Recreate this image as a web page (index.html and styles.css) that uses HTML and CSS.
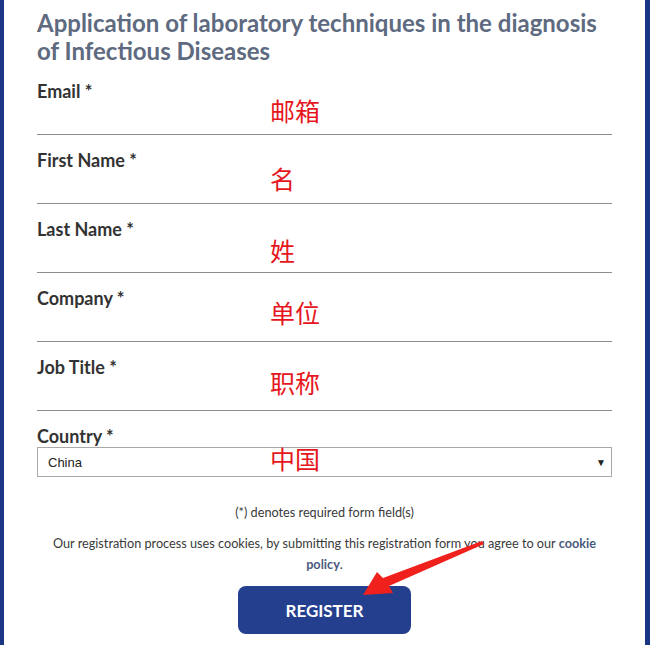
FILE: index.html
```html
<!DOCTYPE html>
<html lang="en">
<head>
<meta charset="utf-8">
<title>Registration</title>
<link rel="stylesheet" href="styles.css">
</head>
<body>
<div class="page">
  <h1 class="title">Application of laboratory techniques in the diagnosis of Infectious Diseases</h1>
  <form class="form">
    <div class="field"><div class="label">Email *</div><span class="note n1">邮箱</span></div>
    <div class="field"><div class="label">First Name *</div><span class="note n2">名</span></div>
    <div class="field"><div class="label">Last Name *</div><span class="note n3">姓</span></div>
    <div class="field"><div class="label">Company *</div><span class="note n4">单位</span></div>
    <div class="field"><div class="label">Job Title *</div><span class="note n5">职称</span></div>
    <div class="field country">
      <div class="label">Country *</div>
      <div class="select"><span>China</span><span class="caret">▼</span></div>
      <span class="note n6">中国</span>
    </div>
    <p class="req">(*) denotes required form field(s)</p>
    <p class="cookies">Our registration process uses cookies, by submitting this registration form you agree to our <a class="link">cookie</a><br><a class="link">policy</a>.</p>
    <div class="actions"><button type="button" class="btn">REGISTER</button></div>
  </form>
  <svg class="arrow" width="650" height="645" viewBox="0 0 650 645">
    <polygon points="482,541 484,544 389,586 393,593 363,595 377,572 383,578" fill="#f0201c"/>
  </svg>
</div>
</body>
</html>
```

FILE: styles.css
```css
html, body {
  margin: 0;
  padding: 0;
  background: #ffffff;
}
.page {
  position: relative;
  width: 650px;
  height: 645px;
  box-sizing: border-box;
  border-left: 4px solid #1b3585;
  border-right: 5px solid #1b3585;
  padding: 0 33px;
  overflow: hidden;
  font-family: Lato, "Noto Sans", sans-serif;
  color: #333333;
}
.title {
  margin: 0;
  padding-top: 9px;
  font-size: 24px;
  line-height: 28px;
  font-weight: 700;
  color: #5e6a80;
}
.form {
  margin: 0;
}
.field {
  position: relative;
  height: 69px;
  box-sizing: border-box;
  padding-top: 14px;
  border-bottom: 1px solid #8d8d8d;
}
.field:first-child {
  height: 70px;
  padding-top: 15px;
}
.label {
  font-size: 18px;
  font-weight: 700;
  color: #333333;
}
.note {
  position: absolute;
  left: 233px;
  font-family: "Noto Sans CJK SC", sans-serif;
  font-size: 25px;
  line-height: 30px;
  color: #e5171c;
}
.n1 { top: 30px; }
.n2 { top: 28px; }
.n3 { top: 31px; }
.n4 { top: 24px; }
.n5 { top: 25px; }
.n6 { top: 32px; }
.field.country {
  border-bottom: none;
  height: auto;
}
.select {
  display: flex;
  justify-content: space-between;
  align-items: center;
  height: 30px;
  box-sizing: border-box;
  border: 1px solid #a9a9a9;
  padding: 0 5px 0 10px;
  font-family: "Liberation Sans", Arial, sans-serif;
  font-size: 13px;
  color: #222;
}
.caret {
  font-size: 10px;
  color: #222;
}
.req {
  margin: 26px 0 0;
  text-align: center;
  font-size: 12.7px;
  line-height: 18px;
  color: #3a3a3a;
}
.cookies {
  margin: 12px 0 0;
  text-align: center;
  font-size: 12.7px;
  line-height: 21px;
  color: #3a3a3a;
}
.link {
  color: #4b5a7d;
  font-weight: 700;
}
.actions {
  display: flex;
  justify-content: center;
  margin-top: 11px;
}
.btn {
  width: 173px;
  height: 48px;
  border: none;
  border-radius: 8px;
  background: #243f8e;
  color: #ffffff;
  font-family: Lato, sans-serif;
  font-size: 17px;
  font-weight: 700;
}
.arrow {
  position: absolute;
  left: -4px;
  top: 0;
}
```
